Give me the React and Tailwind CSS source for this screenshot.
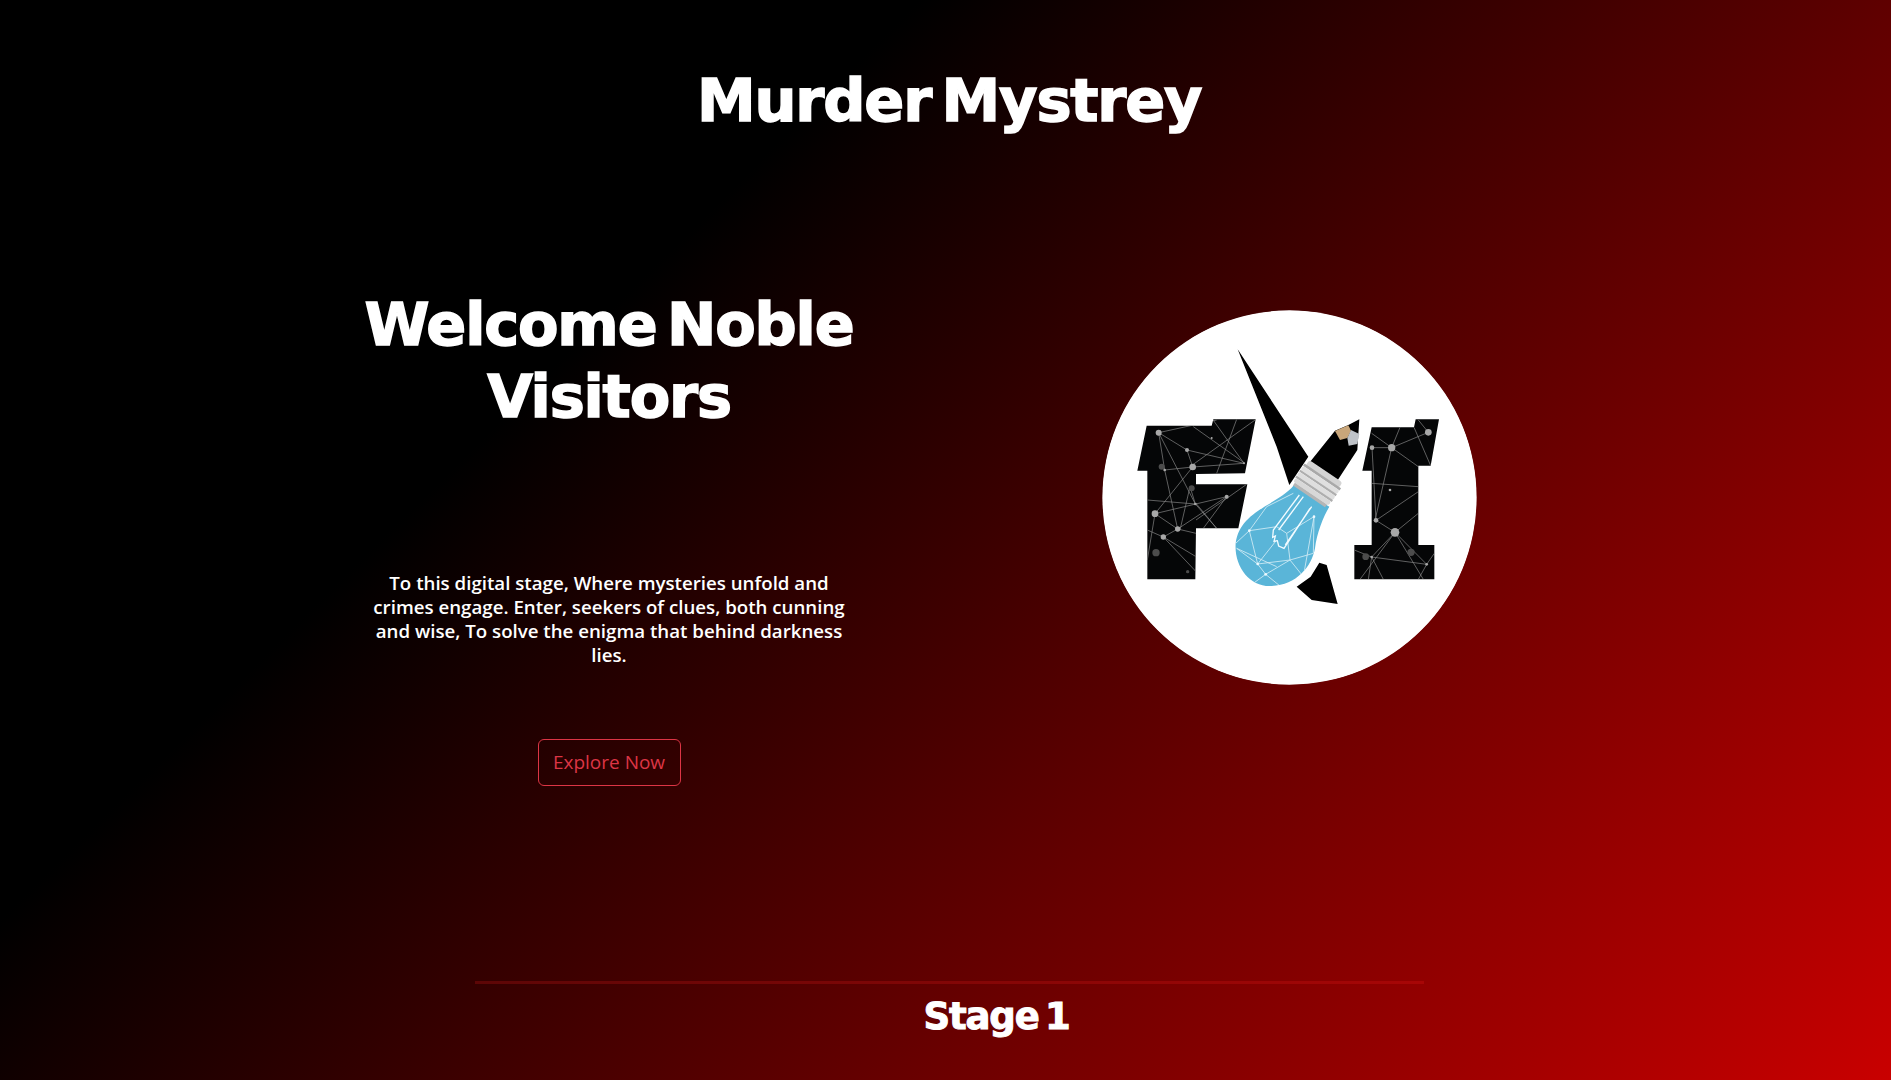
import React from "react";

// Logo network: everything is in the 1200px space of the logo crop
const fLines = [
  [206, 398, 291, 450], [291, 450, 462, 490], [206, 398, 224, 510], [224, 510, 263, 687], [206, 398, 316, 612],
  [291, 450, 308, 501], [308, 501, 224, 510], [308, 501, 462, 490], [308, 501, 195, 641], [195, 641, 410, 590],
  [195, 641, 263, 687], [263, 687, 410, 590], [263, 687, 220, 711], [220, 711, 340, 838], [220, 711, 318, 770],
  [172, 600, 316, 612], [316, 612, 380, 685], [368, 358, 462, 490], [498, 358, 300, 500], [440, 358, 380, 520],
  [310, 380, 465, 490], [206, 398, 380, 360], [410, 590, 340, 685], [195, 641, 172, 780], [220, 711, 172, 690],
  [316, 612, 300, 560], [300, 560, 270, 690], [263, 687, 318, 700], [318, 610, 380, 685], [470, 553, 318, 660],
];
const fDots = [
  [206, 398, 9], [291, 450, 6], [365, 414, 3], [308, 501, 10], [224, 510, 4], [195, 641, 10], [316, 612, 4],
  [410, 590, 6], [263, 687, 8], [220, 711, 8], [462, 490, 3],
];
const fDim = [[215, 500, 9], [305, 565, 9], [198, 758, 11], [293, 815, 5]];

const iLines = [
  [905, 443, 1015, 397], [846, 443, 905, 443], [846, 443, 858, 661], [905, 443, 985, 500], [905, 443, 855, 661],
  [858, 661, 985, 575], [915, 697, 985, 640], [915, 697, 858, 661], [915, 697, 1010, 793], [915, 697, 810, 838],
  [915, 697, 1000, 838], [845, 771, 793, 750], [845, 771, 915, 697], [845, 771, 880, 838], [845, 771, 1010, 793],
  [1015, 397, 985, 360], [972, 382, 1022, 497], [905, 443, 930, 382], [845, 550, 985, 560], [1010, 793, 1033, 760],
  [1010, 793, 985, 838], [835, 838, 845, 771], [845, 400, 905, 443],
];
const iDots = [
  [1015, 397, 10], [905, 443, 11], [846, 443, 7], [900, 570, 4], [858, 661, 7], [915, 697, 13], [845, 771, 4], [1010, 793, 4],
];
const iDim = [[963, 757, 11], [827, 770, 10]];

const bulbLines = [
  [478, 692, 437, 730], [478, 692, 503, 792], [478, 692, 560, 680], [478, 692, 530, 620], [503, 792, 440, 745],
  [503, 792, 527, 823], [503, 792, 600, 780], [527, 823, 600, 780], [527, 823, 490, 850], [527, 823, 570, 858],
  [600, 780, 640, 830], [600, 780, 590, 700], [600, 780, 670, 760], [590, 700, 672, 650], [672, 650, 670, 760],
  [560, 680, 590, 700], [530, 620, 610, 580], [440, 745, 560, 800], [503, 792, 560, 720], [672, 650, 640, 830],
];

const Network = ({ lines, dots, dim, clip }) => (
  <g clipPath={`url(#${clip})`}>
    {lines.map(([x1, y1, x2, y2], i) => (
      <line key={i} x1={x1} y1={y1} x2={x2} y2={y2} stroke="#8c8c8c" strokeWidth="2" />
    ))}
    {dim.map(([cx, cy, r], i) => (
      <circle key={i} cx={cx} cy={cy} r={r} fill="#4c4c4c" />
    ))}
    {dots.map(([cx, cy, r], i) => (
      <circle key={i} cx={cx} cy={cy} r={r} fill="#a8a8a8" />
    ))}
  </g>
);

const fShape = "170,377 365,377 370,358 497,358 465,520 318,522 318,553 472,553 445,685 318,685 316,838 172,838 172,512 142,512";
const iShape = "845,382 972,382 977,358 1047,358 1022,497 985,497 985,735 1033,735 1033,838 793,838 793,735 845,735 845,512 817,512";
const bulbShape = "M612 555 C565 615 450 630 437 730 C432 800 480 862 545 858 C620 855 665 800 675 745 C680 700 700 650 718 620 Z";

const Logo = () => (
  <svg viewBox="37 30 1123 1125" className="w-[375px] h-[375px] shrink-0 rounded-full blur-[0.4px]">
    <defs>
      <clipPath id="fClip"><polygon points={fShape} /></clipPath>
      <clipPath id="iClip"><polygon points={iShape} /></clipPath>
      <clipPath id="bulbClip"><path d={bulbShape} /></clipPath>
    </defs>
    <circle cx="598.5" cy="592.5" r="561.5" fill="#fff" />
    <polygon points={fShape} fill="#050607" />
    <Network lines={fLines} dots={fDots} dim={fDim} clip="fClip" />
    <polygon points={iShape} fill="#050607" />
    <Network lines={iLines} dots={iDots} dim={iDim} clip="iClip" />

    {/* spike and pencil */}
    <polygon points="443,148 655,470 598,555 560,440" fill="#000" />
    <polygon points="655,492 735,392 775,375 808,358 802,450 738,548" fill="#000" />
    <polygon points="735,393 775,376 783,392 772,414 750,420" fill="#c9a67a" />
    <polygon points="783,390 808,402 802,432 776,437 772,414" fill="#bfc3c8" />

    {/* bulb */}
    <path d={bulbShape} fill="#5ab5d8" />
    <g clipPath="url(#bulbClip)">
      {bulbLines.map(([x1, y1, x2, y2], i) => (
        <line key={i} x1={x1} y1={y1} x2={x2} y2={y2} stroke="#d5edf5" strokeWidth="2.5" />
      ))}
      {[[478, 692], [503, 792], [527, 823], [672, 650]].map(([cx, cy], i) => (
        <circle key={i} cx={cx} cy={cy} r="4" fill="#eefaff" />
      ))}
    </g>
    <path
      d="M628 585 L550 690 L548 712 L556 708 L552 724 L562 722 L566 738 L582 745 L660 625 M640 590 L566 690 M586 735 L665 620"
      fill="none"
      stroke="#f2fbff"
      strokeWidth="4"
    />

    {/* screw cap */}
    <g transform="rotate(34 680 555)">
      <rect x="620" y="505" width="120" height="22" rx="9" fill="#d4d4d4" />
      <rect x="614" y="522" width="132" height="8" fill="#a9a9a9" />
      <rect x="614" y="530" width="132" height="14" rx="6" fill="#e0e0e0" />
      <rect x="614" y="544" width="132" height="7" fill="#aeaeae" />
      <rect x="614" y="551" width="132" height="14" rx="6" fill="#dedede" />
      <rect x="614" y="565" width="132" height="7" fill="#aeaeae" />
      <rect x="616" y="572" width="128" height="14" rx="6" fill="#d8d8d8" />
      <rect x="622" y="586" width="116" height="10" fill="#b5b5b5" />
    </g>

    <polygon points="688,788 710,795 743,912 665,900 620,860 662,830" fill="#000" />
  </svg>
);

export default function App() {
  return (
    <div className="w-full h-screen overflow-hidden flex flex-col bg-[linear-gradient(135deg,#000_31%,#c90000_100%)] text-white font-['Open_Sans',sans-serif]">
      <h1 className="mt-[65px] ml-[697px] w-fit text-[59px] leading-[72px] font-bold font-['DejaVu_Sans',sans-serif] tracking-[-0.02em] [word-spacing:-0.15em] [-webkit-text-stroke:1.5px_white]">
        Murder Mystrey
      </h1>

      <div className="mt-[152px] ml-[364px] flex items-start">
        <div className="w-[490px] flex flex-col items-center text-center">
          <h2 className="text-[59px] leading-[72px] font-bold font-['DejaVu_Sans',sans-serif] tracking-[-0.02em] [word-spacing:-0.15em] [-webkit-text-stroke:1.5px_white]">
            Welcome Noble Visitors
          </h2>
          <p className="mt-[138px] text-[18.7px] leading-6 font-semibold">
            To this digital stage, Where mysteries unfold and crimes engage. Enter, seekers of clues, both cunning and wise, To solve the enigma that behind darkness lies.
          </p>
          <button className="mt-[72px] h-[47px] w-[143px] rounded-md border border-[#dc3545] text-[19px] text-[#dc3545]">
            Explore Now
          </button>
        </div>
        <div className="ml-[248px] mt-[21px]">
          <Logo />
        </div>
      </div>

      <div className="mt-auto mb-[40px] ml-[475px] w-[949px] flex flex-col items-center">
        <div className="w-full h-[3px] bg-[#ff2020]/20"></div>
        <div className="ml-[94px] mt-[10px] text-[37px] leading-[46px] font-bold font-['DejaVu_Sans',sans-serif] tracking-[-0.03em] [word-spacing:-0.15em] [-webkit-text-stroke:1px_white]">
          Stage 1
        </div>
      </div>
    </div>
  );
}
